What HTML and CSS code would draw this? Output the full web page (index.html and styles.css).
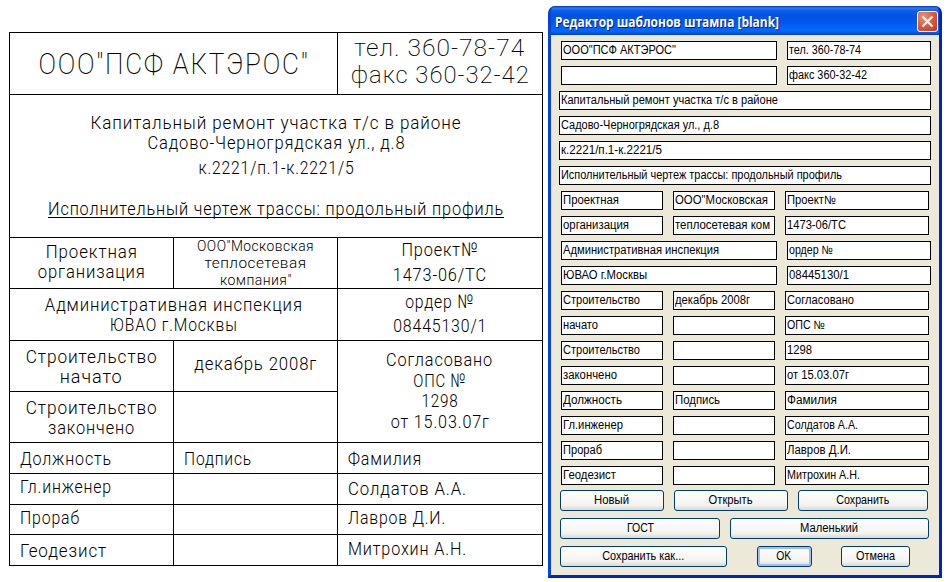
FILE: index.html
```html
<!DOCTYPE html>
<html lang="ru">
<head>
<meta charset="utf-8">
<title>Редактор шаблонов штампа</title>
<link rel="stylesheet" href="styles.css">
</head>
<body>
<main class="workspace">
  <section class="stamp">
    <div class="cell company"><span data-w="271">ООО"ПСФ АКТЭРОС"</span></div>
    <div class="cell phones"><span data-w="171">тел. 360-78-74</span><span data-w="179">факс 360-32-42</span></div>

    <div class="cell object">
      <span data-w="371">Капитальный ремонт участка т/с в районе</span>
      <span data-w="258">Садово-Черногрядская ул., д.8</span>
      <span class="gap-5" data-w="156">к.2221/п.1-к.2221/5</span>
      <span class="gap-21 underlined" data-w="456">Исполнительный чертеж трассы: продольный профиль</span>
    </div>

    <div class="cell pad-4"><span data-w="92">Проектная</span><span data-w="108">организация</span></div>
    <div class="cell small"><span data-w="117">ООО"Московская</span><span data-w="102">теплосетевая</span><span data-w="72">компания"</span></div>
    <div class="cell pad-2"><span data-w="77">Проект№</span><span class="gap-5" data-w="94">1473-06/ТС</span></div>

    <div class="cell span-2 pad-6"><span data-w="258">Административная инспекция</span><span data-w="128">ЮВАО г.Москвы</span></div>
    <div class="cell pad-3"><span data-w="69">ордер №</span><span class="gap-4" data-w="94">08445130/1</span></div>

    <div class="cell pad-6"><span data-w="132">Строительство</span><span data-w="63">начато</span></div>
    <div class="cell pad-13"><span data-w="123">декабрь 2008г</span></div>
    <div class="cell approval"><span data-w="107">Согласовано</span><span data-w="53">ОПС №</span><span data-w="37">1298</span><span data-w="99">от 15.03.07г</span></div>
    <div class="cell pad-6"><span data-w="132">Строительство</span><span data-w="87">закончено</span></div>
    <div class="cell"></div>

    <div class="cell left pad-6"><span data-w="92">Должность</span></div>
    <div class="cell left pad-6"><span data-w="68">Подпись</span></div>
    <div class="cell left pad-6"><span data-w="74">Фамилия</span></div>

    <div class="cell left pad-3"><span data-w="92">Гл.инженер</span></div>
    <div class="cell"></div>
    <div class="cell left pad-5"><span data-w="119">Солдатов А.А.</span></div>

    <div class="cell left pad-3"><span data-w="60">Прораб</span></div>
    <div class="cell"></div>
    <div class="cell left pad-3"><span data-w="98">Лавров Д.И.</span></div>

    <div class="cell left pad-6"><span data-w="87">Геодезист</span></div>
    <div class="cell"></div>
    <div class="cell left pad-4"><span data-w="119">Митрохин А.Н.</span></div>
  </section>

  <section class="dialog">
    <header class="titlebar">
      <span class="caption" data-w="224">Редактор шаблонов штампа [blank]</span>
      <div class="close"><svg width="13" height="13" viewBox="0 0 13 13"><path d="M1.5 1.5l10 10M11.5 1.5l-10 10" stroke="#fff" stroke-width="2.2"/></svg></div>
    </header>
    <div class="body">
      <div class="row pair"><div class="field"><span data-w="113">ООО"ПСФ АКТЭРОС"</span></div><div class="field"><span data-w="72">тел. 360-78-74</span></div></div>
      <div class="row pair"><div class="field"></div><div class="field"><span data-w="78">факс 360-32-42</span></div></div>
      <div class="row full"><div class="field"><span data-w="217">Капитальный ремонт участка т/с в районе</span></div></div>
      <div class="row full"><div class="field"><span data-w="158">Садово-Черногрядская ул., д.8</span></div></div>
      <div class="row full"><div class="field"><span data-w="101">к.2221/п.1-к.2221/5</span></div></div>
      <div class="row full"><div class="field"><span data-w="281">Исполнительный чертеж трассы: продольный профиль</span></div></div>
      <div class="row triple"><div class="field"><span data-w="56">Проектная</span></div><div class="field"><span data-w="93">ООО"Московская</span></div><div class="field"><span data-w="49">Проект№</span></div></div>
      <div class="row triple"><div class="field"><span data-w="66">организация</span></div><div class="field"><span data-w="95">теплосетевая ком</span></div><div class="field"><span data-w="59">1473-06/ТС</span></div></div>
      <div class="row pair"><div class="field"><span data-w="156">Административная инспекция</span></div><div class="field"><span data-w="44">ордер №</span></div></div>
      <div class="row pair"><div class="field"><span data-w="84">ЮВАО г.Москвы</span></div><div class="field"><span data-w="60">08445130/1</span></div></div>
      <div class="row triple"><div class="field"><span data-w="77">Строительство</span></div><div class="field"><span data-w="75">декабрь 2008г</span></div><div class="field"><span data-w="67">Согласовано</span></div></div>
      <div class="row triple"><div class="field"><span data-w="35">начато</span></div><div class="field"></div><div class="field"><span data-w="38">ОПС №</span></div></div>
      <div class="row triple"><div class="field"><span data-w="77">Строительство</span></div><div class="field"></div><div class="field"><span data-w="25">1298</span></div></div>
      <div class="row triple"><div class="field"><span data-w="54">закончено</span></div><div class="field"></div><div class="field"><span data-w="62">от 15.03.07г</span></div></div>
      <div class="row triple"><div class="field"><span data-w="59">Должность</span></div><div class="field"><span data-w="45">Подпись</span></div><div class="field"><span data-w="50">Фамилия</span></div></div>
      <div class="row triple"><div class="field"><span data-w="60">Гл.инженер</span></div><div class="field"></div><div class="field"><span data-w="71">Солдатов А.А.</span></div></div>
      <div class="row triple"><div class="field"><span data-w="39">Прораб</span></div><div class="field"></div><div class="field"><span data-w="64">Лавров Д.И.</span></div></div>
      <div class="row triple"><div class="field"><span data-w="53">Геодезист</span></div><div class="field"></div><div class="field"><span data-w="73">Митрохин А.Н.</span></div></div>
      <div class="buttons templates"><div class="btn"><span data-w="35">Новый</span></div><div class="btn"><span data-w="44">Открыть</span></div><div class="btn"><span data-w="53">Сохранить</span></div></div>
      <div class="buttons presets"><div class="btn"><span data-w="27">ГОСТ</span></div><div class="btn"><span data-w="58">Маленький</span></div></div>
      <div class="buttons actions"><div class="btn"><span data-w="82">Сохранить как...</span></div><div class="btn default"><span data-w="15">OK</span></div><div class="btn"><span data-w="39">Отмена</span></div></div>
    </div>
  </section>
</main>
<script src="fit.js"></script>
</body>
</html>
```
FILE: styles.css
```css
* { box-sizing: border-box; }

body { margin: 0; background: #fff; color: #000; }

.workspace {
  display: flex;
  gap: 5px;
  width: 949px;
  height: 582px;
  padding: 6px 0 0 9px;
  overflow: hidden;
}

[data-w] { display: block; white-space: nowrap; width: max-content; }

/* Drawing stamp */
.stamp {
  display: grid;
  grid-template-columns: 164px 164px 205px;
  grid-template-rows: 62px 143px 51px 52px 51px 51px 31px 31px 30px 31px;
  width: 534px;
  height: 534px;
  margin-top: 26px;
  border-left: 1px solid #000;
  border-top: 1px solid #000;
  font: 300 19px/20px Roboto, sans-serif;
  letter-spacing: 1px;
}

.cell {
  display: flex;
  flex-direction: column;
  align-items: center;
  min-width: 0;
  min-height: 0;
  border-right: 1px solid #000;
  border-bottom: 1px solid #000;
}

.left { align-items: flex-start; padding-left: 10px; }
.left [data-w] { transform-origin: left center; }
.span-2 { grid-column: span 2; }

.company { grid-column: span 2; font-size: 29.5px; font-weight: 200; line-height: 62px; letter-spacing: 2px; }
.phones { padding-top: 2px; font-size: 24px; font-weight: 200; line-height: 27px; }
.object { grid-column: span 3; padding-top: 18px; }
.small { font-size: 15.5px; line-height: 17px; letter-spacing: 0.5px; }
.approval { grid-row: span 2; padding-top: 9px; line-height: 20.67px; }

.pad-2 { padding-top: 2px; }
.pad-3 { padding-top: 3px; }
.pad-4 { padding-top: 4px; }
.pad-5 { padding-top: 5px; }
.pad-6 { padding-top: 6px; }
.pad-13 { padding-top: 13px; }
.gap-4 { margin-top: 4px; }
.gap-5 { margin-top: 5px; }
.gap-21 { margin-top: 21px; }
.underlined { height: 19px; border-bottom: 1px solid #000; }

/* Template editor window */
.dialog {
  width: 394px;
  height: 572px;
  border: 3px solid #0842d8;
  border-top: 0;
  border-right-color: #0026b8;
  border-bottom-color: #0026b8;
  border-radius: 7px 7px 0 0;
  background: #0a50e0;
  overflow: hidden;
}

.titlebar {
  display: flex;
  justify-content: space-between;
  height: 29px;
  margin: 0 -3px;
  padding: 5px 4px 0 7px;
  background: linear-gradient(#0831b5 0, #2a7cf5 2px, #0a5be8 5px, #0053e1 10px, #0058ee 17px, #0468fe 24px, #0462f4 26px, #003fcb 29px);
}

.caption {
  color: #fff;
  font: bold 13.5px/22px "Open Sans", sans-serif;
  text-shadow: 1px 1px #0a1883;
  transform-origin: left center;
}

.close {
  display: flex;
  align-items: center;
  justify-content: center;
  width: 21px;
  height: 21px;
  border: 1px solid #fff;
  border-radius: 3px;
  background: radial-gradient(circle at 30% 25%, #ed9078, #e0583a 50%, #c73812);
}

.body {
  height: 540px;
  padding-top: 6px;
  background: #ece9d8;
  font: 12px/17px "Liberation Sans", sans-serif;
}

.row { display: grid; height: 19px; margin-bottom: 6px; }
.full { grid-template-columns: 372px; padding-left: 8px; }
.pair { grid-template-columns: 216px 144px; gap: 10px; padding-left: 10px; }
.triple { grid-template-columns: 102px 102px 144px; gap: 10px; padding-left: 10px; }

.field { border: 1px solid #000; background: #fff; padding-left: 1px; overflow: hidden; }
.field [data-w] { transform-origin: left center; }

.buttons { display: grid; height: 20px; margin-bottom: 8px; padding-left: 9px; }
.row + .buttons { margin-top: -1px; }
.templates { grid-template-columns: 104px 114px 130px; gap: 10px; }
.presets { grid-template-columns: 160px 199px; gap: 10px; }
.actions { grid-template-columns: 167px 55px 69px; column-gap: 29.5px; }

.btn {
  display: flex;
  justify-content: center;
  border: 1px solid #003c74;
  border-radius: 3px;
  background: linear-gradient(#fff, #f3f3ef 75%, #dcd8cf);
  line-height: 19px;
}

.default { box-shadow: inset 0 0 0 2px #a3bdf2; }
```
FILE: fit.js
```javascript
// Condense or widen each label to its lettering width.
document.querySelectorAll('[data-w]').forEach(function (el) {
  var natural = el.getBoundingClientRect().width;
  el.style.transform = 'scaleX(' + (Number(el.dataset.w) / natural).toFixed(4) + ')';
});
```
